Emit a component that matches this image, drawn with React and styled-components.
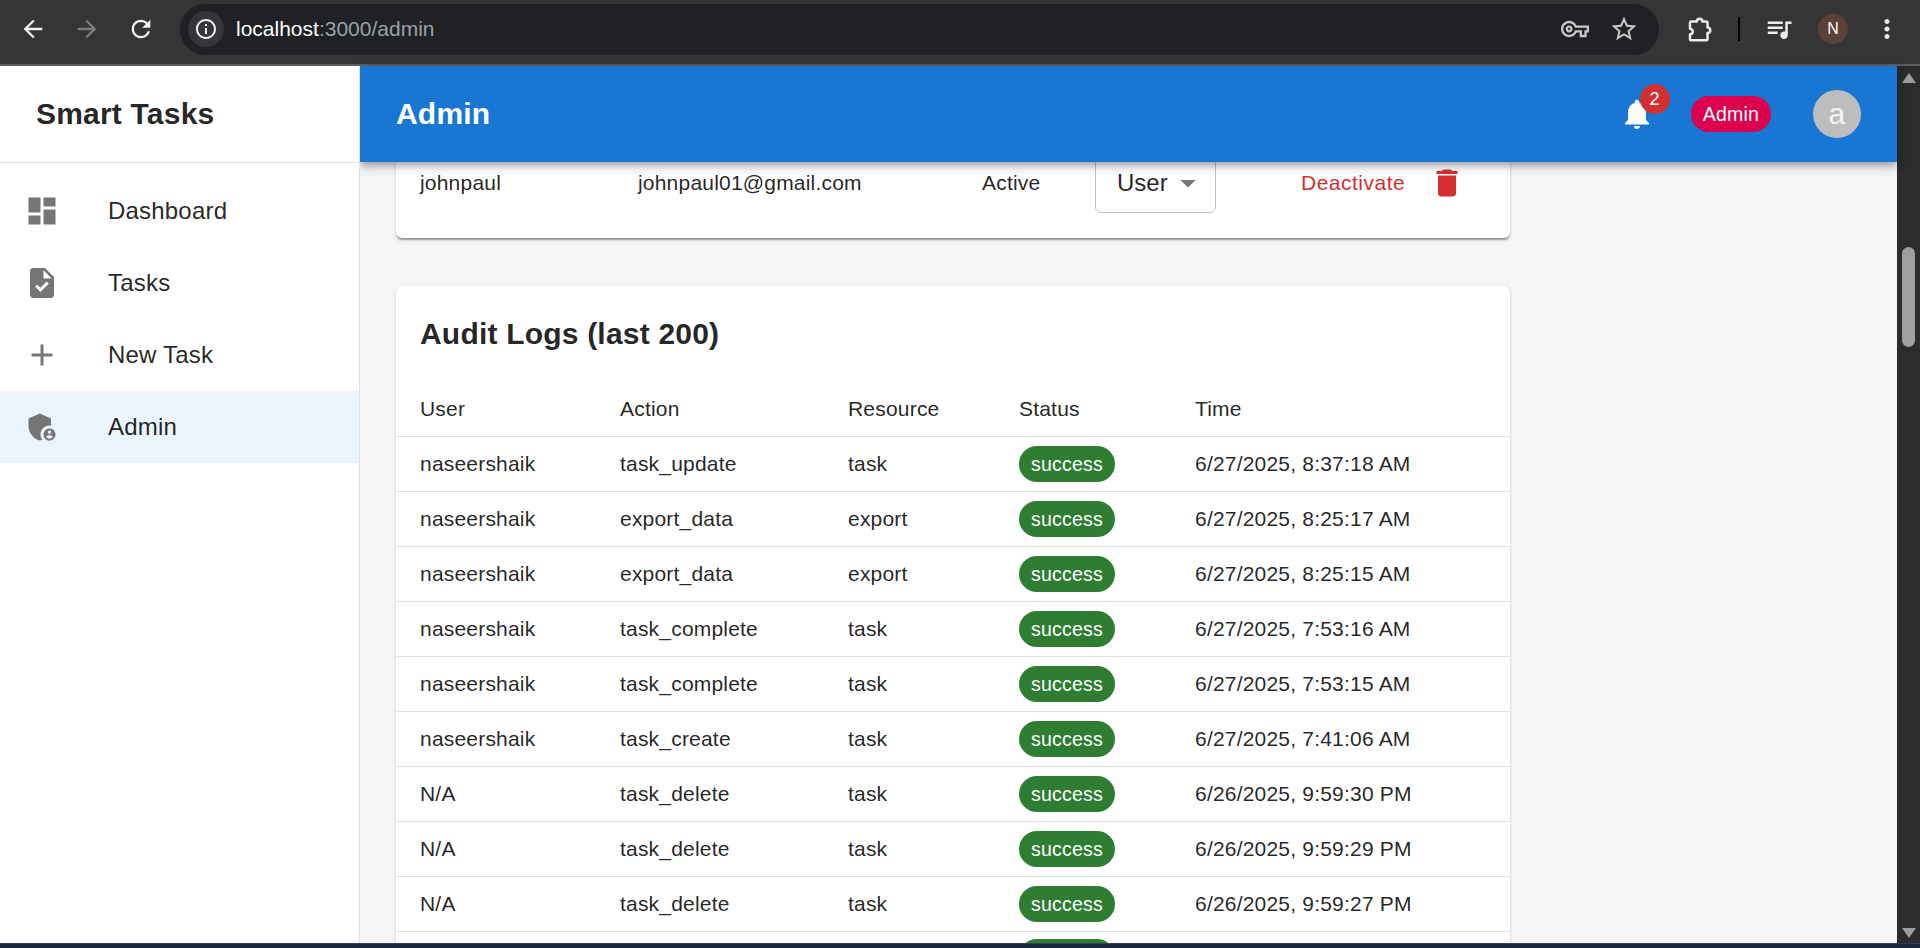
import styled, { createGlobalStyle } from "styled-components";
import {
  MdArrowBack,
  MdArrowForward,
  MdRefresh,
  MdInfoOutline,
  MdOutlineVpnKey,
  MdStarBorder,
  MdQueueMusic,
  MdMoreVert,
  MdDashboard,
  MdTask,
  MdAdd,
  MdAdminPanelSettings,
  MdNotifications,
  MdDelete,
  MdArrowDropDown,
} from "react-icons/md";

const GlobalStyle = createGlobalStyle`
  html, body {
    margin: 0;
    height: 948px;
    overflow: hidden;
    background: #f5f5f5;
    font-family: "Liberation Sans", Arial, sans-serif;
    letter-spacing: 0.2px;
    color: rgba(0, 0, 0, 0.87);
  }
  * { box-sizing: border-box; }
`;

const Page = styled.div`
  display: flex;
  flex-direction: column;
  height: 948px;
`;

// browser chrome
const Toolbar = styled.div`
  height: 66px;
  flex: none;
  display: flex;
  align-items: center;
  padding-bottom: 6px;
  background: #353535;
  border-bottom: 2px solid #5c5c5c;
  letter-spacing: 0;
`;
const NavIcons = styled.div`
  width: 180px;
  flex: none;
  display: flex;
  align-items: center;
  gap: 26px;
  padding-left: 19px;
  color: #f1f1f1;
`;
const Omnibox = styled.div`
  width: 1479px;
  height: 51px;
  flex: none;
  display: flex;
  align-items: center;
  padding: 0 20px 0 8px;
  background: #202124;
  border-radius: 26px;
`;
const InfoChip = styled.div`
  width: 36px;
  height: 36px;
  flex: none;
  display: flex;
  align-items: center;
  justify-content: center;
  border-radius: 50%;
  background: #35363a;
  color: #f1f1f1;
`;
const Url = styled.div`
  margin-left: 12px;
  flex: 1;
  font-size: 21px;
  color: #9aa0a6;
  b {
    font-weight: 400;
    color: #fff;
  }
`;
const OmniActions = styled.div`
  display: flex;
  align-items: center;
  gap: 20px;
  color: #c7c7c7;
`;
const ToolbarActions = styled.div`
  flex: 1;
  display: flex;
  align-items: center;
  color: #ececec;
  padding-left: 26px;
`;
const Divider = styled.div`
  width: 2px;
  height: 24px;
  margin: 0 24px 0 23px;
  background: #000;
`;
const Profile = styled.div`
  width: 30px;
  height: 30px;
  margin: 0 24px 0 24px;
  display: flex;
  align-items: center;
  justify-content: center;
  border-radius: 50%;
  background: #5d4037;
  color: #fff;
  font-size: 16px;
`;

// app shell
const Shell = styled.div`
  flex: 1;
  min-height: 0;
  display: flex;
`;
const Sidebar = styled.aside`
  width: 360px;
  flex: none;
  position: relative;
  z-index: 2;
  background: #fff;
  border-right: 1px solid #e0e0e0;
`;
const Brand = styled.div`
  height: 97px;
  display: flex;
  align-items: center;
  padding-left: 36px;
  border-bottom: 1px solid #e0e0e0;
  font-size: 30px;
  font-weight: 700;
`;
const NavList = styled.nav`
  padding-top: 12px;
`;
const NavItem = styled.div`
  height: 72px;
  display: flex;
  align-items: center;
  padding-left: 24px;
  font-size: 24px;
  background: ${(p) => (p.$active ? "#ebf3fb" : "transparent")};
  svg {
    color: #757575;
    margin-right: 48px;
  }
`;
const Main = styled.div`
  flex: 1;
  min-width: 0;
  display: flex;
  flex-direction: column;
`;
const AppBar = styled.header`
  height: 96px;
  flex: none;
  position: relative;
  z-index: 1;
  display: flex;
  align-items: center;
  padding: 0 36px;
  background: #1976d2;
  color: #fff;
  box-shadow: 0 3px 6px -1.5px rgba(0, 0, 0, 0.2), 0 6px 7.5px 0 rgba(0, 0, 0, 0.14),
    0 1.5px 15px 0 rgba(0, 0, 0, 0.12);
`;
const AppTitle = styled.div`
  flex: 1;
  font-size: 30px;
  font-weight: 700;
`;
const BellButton = styled.div`
  position: relative;
  width: 60px;
  height: 60px;
  display: flex;
  align-items: center;
  justify-content: center;
`;
const Badge = styled.span`
  position: absolute;
  top: 0;
  right: -3px;
  width: 30px;
  height: 30px;
  display: flex;
  align-items: center;
  justify-content: center;
  border-radius: 50%;
  background: #d32f2f;
  font-size: 18px;
`;
const RoleChip = styled.div`
  height: 36px;
  margin-left: 24px;
  display: flex;
  align-items: center;
  padding: 0 12px;
  border-radius: 18px;
  background: #dc004e;
  font-size: 19.5px;
`;
const Avatar = styled.div`
  width: 48px;
  height: 48px;
  margin-left: 42px;
  display: flex;
  align-items: center;
  justify-content: center;
  border-radius: 50%;
  background: #bdbdbd;
  font-size: 30px;
  color: #f5f5f5;
`;
const Content = styled.main`
  flex: 1;
  min-height: 0;
  overflow: hidden;
  padding: 0 387px 0 36px;
`;

// cards
const Card = styled.section`
  width: 1114px;
  background: #fff;
  border-radius: 6px;
  box-shadow: 0 3px 1.5px -1.5px rgba(0, 0, 0, 0.2), 0 1.5px 1.5px 0 rgba(0, 0, 0, 0.14),
    0 1.5px 4.5px 0 rgba(0, 0, 0, 0.12);
`;
const UserCard = styled(Card)`
  margin-top: -9px;
  padding-bottom: 25px;
`;
const AuditCard = styled(Card)`
  margin-top: 48px;
`;
const UserRow = styled.div`
  height: 60px;
  display: grid;
  grid-template-columns: 218px 344px 113px 206px 128px 36px;
  align-items: center;
  padding-left: 24px;
  font-size: 21px;
`;
const RoleSelect = styled.div`
  width: 121px;
  height: 60px;
  display: flex;
  align-items: center;
  padding-left: 21px;
  border: 1px solid #c4c4c4;
  border-radius: 6px;
  font-size: 24px;
  letter-spacing: 0;
  svg {
    color: #757575;
    margin-left: 2px;
  }
`;
const DangerButton = styled.div`
  color: #d32f2f;
  letter-spacing: 0.5px;
`;
const TrashIcon = styled(MdDelete)`
  color: #d32f2f;
  display: block;
`;
const CardTitle = styled.h2`
  height: 96px;
  margin: 0;
  display: flex;
  align-items: center;
  padding-left: 24px;
  font-size: 30px;
  font-weight: 700;
`;
const LogRow = styled.div`
  height: 55px;
  display: grid;
  grid-template-columns: 200px 228px 171px 176px 339px;
  align-items: center;
  border-bottom: 1px solid #e0e0e0;
  font-size: 21px;
`;
const Cell = styled.div`
  padding-left: 24px;
  white-space: nowrap;
`;
const StatusChip = styled.span`
  display: inline-flex;
  align-items: center;
  height: 36px;
  padding: 0 12px;
  border-radius: 18px;
  background: #2e7d32;
  color: #fff;
  font-size: 19.5px;
`;
// the row below the fold, only the top of its chip shows above the window edge
const ChipEdge = styled(StatusChip)`
  width: 96px;
`;

// page scrollbar
const Scrollbar = styled.div`
  width: 23px;
  flex: none;
  display: flex;
  flex-direction: column;
  align-items: center;
  padding: 7px 0 5px;
  background: #2c2c2c;
`;
const ArrowUp = styled.div`
  width: 0;
  height: 0;
  border-left: 7.5px solid transparent;
  border-right: 7.5px solid transparent;
  border-bottom: 10px solid #9c9c9c;
`;
const ArrowDown = styled.div`
  width: 0;
  height: 0;
  margin-top: auto;
  border-left: 7.5px solid transparent;
  border-right: 7.5px solid transparent;
  border-top: 10px solid #9c9c9c;
`;
const Thumb = styled.div`
  width: 13px;
  height: 100px;
  margin-top: 164px;
  border-radius: 7px;
  background: #9f9f9f;
`;
const Taskbar = styled.div`
  height: 5px;
  flex: none;
  background: linear-gradient(#33404f 0 1px, #1a2a3a 1px);
`;

// chrome's extensions button, knobs on top and right, notch on the left
const PuzzleIcon = () => (
  <svg width="30" height="30" viewBox="0 0 24 24" fill="none" stroke="currentColor" strokeWidth="2" strokeLinejoin="round">
    <path d="M5 6h4.5a2.2 2.2 0 0 1 4.4 0H17a1 1 0 0 1 1 1v3.8a2.2 2.2 0 0 1 0 4.4V20a1 1 0 0 1-1 1H5a1 1 0 0 1-1-1v-3.8a2.2 2.2 0 0 0 0-4.4V7a1 1 0 0 1 1-1z" />
  </svg>
);

const navItems = [
  { label: "Dashboard", Icon: MdDashboard },
  { label: "Tasks", Icon: MdTask },
  { label: "New Task", Icon: MdAdd },
  { label: "Admin", Icon: MdAdminPanelSettings, active: true },
];

const logs = [
  ["naseershaik", "task_update", "task", "6/27/2025, 8:37:18 AM"],
  ["naseershaik", "export_data", "export", "6/27/2025, 8:25:17 AM"],
  ["naseershaik", "export_data", "export", "6/27/2025, 8:25:15 AM"],
  ["naseershaik", "task_complete", "task", "6/27/2025, 7:53:16 AM"],
  ["naseershaik", "task_complete", "task", "6/27/2025, 7:53:15 AM"],
  ["naseershaik", "task_create", "task", "6/27/2025, 7:41:06 AM"],
  ["N/A", "task_delete", "task", "6/26/2025, 9:59:30 PM"],
  ["N/A", "task_delete", "task", "6/26/2025, 9:59:29 PM"],
  ["N/A", "task_delete", "task", "6/26/2025, 9:59:27 PM"],
];

const App = () => {
  return (
    <Page>
      <GlobalStyle />
      <Toolbar>
        <NavIcons>
          <MdArrowBack size={28} />
          <MdArrowForward size={28} color="#7c7c7c" />
          <MdRefresh size={28} />
        </NavIcons>
        <Omnibox>
          <InfoChip>
            <MdInfoOutline size={24} />
          </InfoChip>
          <Url>
            <b>localhost</b>:3000/admin
          </Url>
          <OmniActions>
            <MdOutlineVpnKey size={28} />
            <MdStarBorder size={30} />
          </OmniActions>
        </Omnibox>
        <ToolbarActions>
          <PuzzleIcon />
          <Divider />
          <MdQueueMusic size={30} />
          <Profile>N</Profile>
          <MdMoreVert size={30} />
        </ToolbarActions>
      </Toolbar>

      <Shell>
        <Sidebar>
          <Brand>Smart Tasks</Brand>
          <NavList>
            {navItems.map(({ label, Icon, active }) => (
              <NavItem key={label} $active={active}>
                <Icon size={36} />
                {label}
              </NavItem>
            ))}
          </NavList>
        </Sidebar>

        <Main>
          <AppBar>
            <AppTitle>Admin</AppTitle>
            <BellButton>
              <MdNotifications size={36} />
              <Badge>2</Badge>
            </BellButton>
            <RoleChip>Admin</RoleChip>
            <Avatar>a</Avatar>
          </AppBar>
          <Content>
            <UserCard>
              <UserRow>
                <div>johnpaul</div>
                <div>johnpaul01@gmail.com</div>
                <div>Active</div>
                <RoleSelect>
                  User
                  <MdArrowDropDown size={36} />
                </RoleSelect>
                <DangerButton>Deactivate</DangerButton>
                <TrashIcon size={36} />
              </UserRow>
            </UserCard>

            <AuditCard>
              <CardTitle>Audit Logs (last 200)</CardTitle>
              <LogRow>
                <Cell>User</Cell>
                <Cell>Action</Cell>
                <Cell>Resource</Cell>
                <Cell>Status</Cell>
                <Cell>Time</Cell>
              </LogRow>
              {logs.map(([user, action, resource, time]) => (
                <LogRow key={time}>
                  <Cell>{user}</Cell>
                  <Cell>{action}</Cell>
                  <Cell>{resource}</Cell>
                  <Cell>
                    <StatusChip>success</StatusChip>
                  </Cell>
                  <Cell>{time}</Cell>
                </LogRow>
              ))}
              <LogRow>
                <Cell />
                <Cell />
                <Cell />
                <Cell>
                  <ChipEdge />
                </Cell>
                <Cell />
              </LogRow>
            </AuditCard>
          </Content>
        </Main>

        <Scrollbar>
          <ArrowUp />
          <Thumb />
          <ArrowDown />
        </Scrollbar>
      </Shell>
      <Taskbar />
    </Page>
  );
};

export default App;
